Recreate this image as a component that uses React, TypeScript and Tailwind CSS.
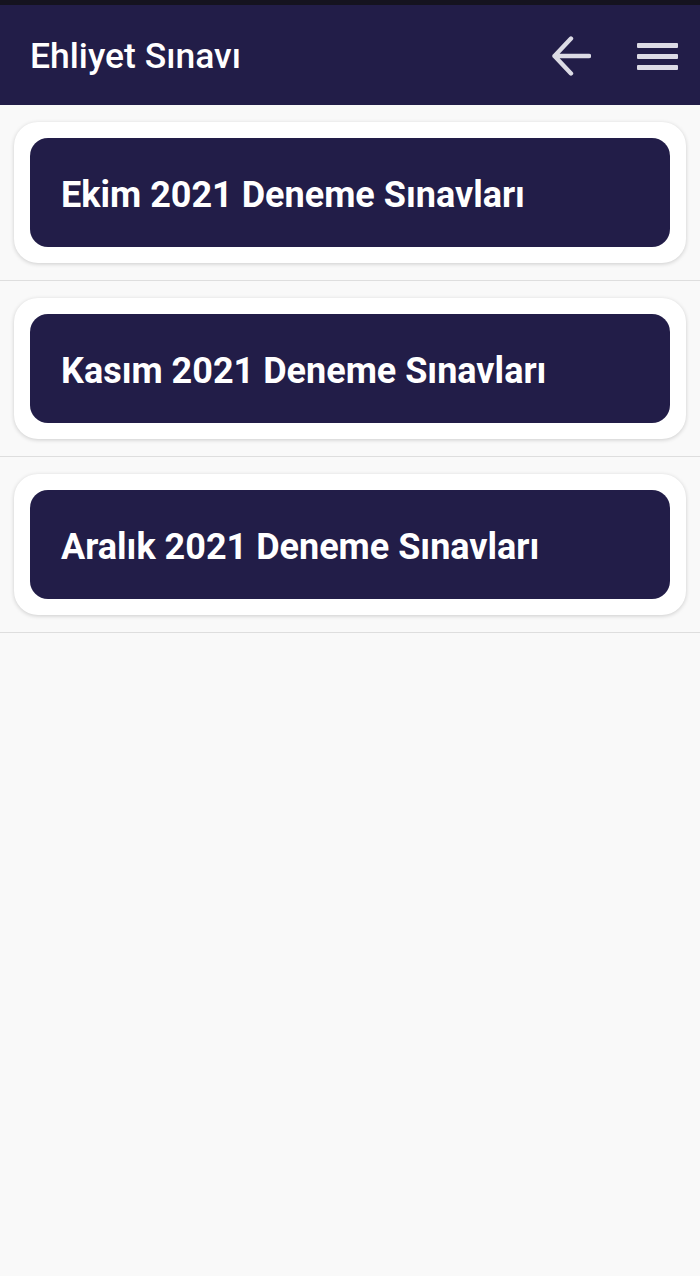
import React from "react";

const exams = [
  "Ekim 2021 Deneme Sınavları",
  "Kasım 2021 Deneme Sınavları",
  "Aralık 2021 Deneme Sınavları",
];

const BackIcon = () => (
  <svg width="40" height="40" viewBox="0 0 40 40" fill="none">
    <path
      d="M38 20H3.5M20 2.5L3.5 20L20 37.5"
      stroke="#dcdbe5"
      strokeWidth="4.4"
      strokeLinecap="round"
      strokeLinejoin="round"
    />
  </svg>
);

const MenuIcon = () => (
  <div className="flex flex-col gap-[6px] w-[41px]">
    <div className="h-[5px] bg-[#dcdbe5] rounded-[1px]" />
    <div className="h-[5px] bg-[#dcdbe5] rounded-[1px]" />
    <div className="h-[5px] bg-[#dcdbe5] rounded-[1px]" />
  </div>
);

export default function App() {
  return (
    <div
      className="w-[700px] h-[1276px] bg-[#f9f9f9] flex flex-col"
      style={{ fontFamily: "Roboto, 'Noto Sans', sans-serif" }}
    >
      {/* status bar */}
      <div className="h-[5px] bg-[#15131f]" />

      {/* app bar */}
      <div className="h-[100px] bg-[#221d48] flex items-center pl-[30px] pr-[22px]">
        <h1 className="text-white text-[35.5px] font-medium flex-1 leading-none mt-[4px]">
          Ehliyet Sınavı
        </h1>
        <div className="flex items-center gap-[46px] mt-[2px]">
          <BackIcon />
          <MenuIcon />
        </div>
      </div>

      {/* list */}
      <div className="flex flex-col">
        {exams.map((title) => (
          <div key={title} className="border-b border-[#dedede] px-[14px] py-[17px]">
            <div className="bg-white rounded-[24px] p-[16px] shadow-[0_1px_4px_rgba(0,0,0,0.18)]">
              <div className="bg-[#221d48] rounded-[18px] h-[109px] flex items-center pl-[31px]">
                <span className="text-white text-[36px] font-bold leading-none mt-[4px]">
                  {title}
                </span>
              </div>
            </div>
          </div>
        ))}
      </div>
    </div>
  );
}
